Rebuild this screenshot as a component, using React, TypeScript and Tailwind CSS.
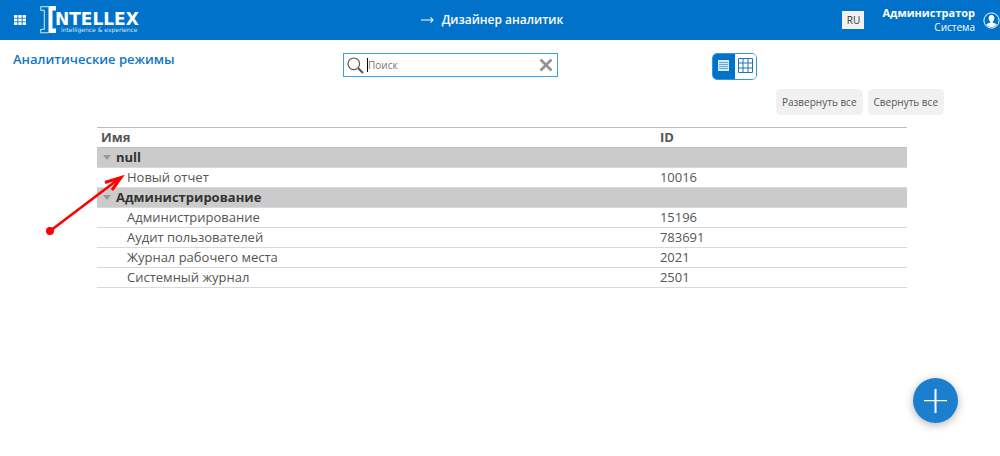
import { Fragment, useState } from 'react';

interface Report {
  name: string;
  id: number;
}

interface ReportGroup {
  name: string;
  reports: Report[];
}

const GROUPS: ReportGroup[] = [
  { name: 'null', reports: [{ name: 'Новый отчет', id: 10016 }] },
  {
    name: 'Администрирование',
    reports: [
      { name: 'Администрирование', id: 15196 },
      { name: 'Аудит пользователей', id: 783691 },
      { name: 'Журнал рабочего места', id: 2021 },
      { name: 'Системный журнал', id: 2501 },
    ],
  },
];

function Logo() {
  return (
    <svg width="104" height="28" viewBox="0 0 104 28" role="img" aria-label="Intellex">
      {/* Outlined left half of the I */}
      <path
        d="M8.5 .7H.7v3.6h3.6v19H.7v3.5H8.5"
        fill="none"
        stroke="#fff"
        strokeOpacity=".85"
        strokeWidth="1"
      />
      {/* Solid right half */}
      <path d="M8.5 0H16v4.500h-3.500v18H16V27H8.500z" fill="#fff" />
      <text x="15" y="19" fill="#fff" fontFamily="DejaVu Sans, sans-serif" fontSize="17" fontWeight="700">
        NTELLEX
      </text>
      <text x="21" y="26" fill="#fff" fillOpacity=".85" fontFamily="DejaVu Sans, sans-serif" fontSize="6">
        intelligence &amp; experience
      </text>
    </svg>
  );
}

function Header() {
  return (
    <header className="grid h-10 grid-cols-[1fr_auto_1fr] items-center bg-[#0072c9] text-white">
      <div className="flex items-center gap-3.5 pl-3.5">
        <button type="button" aria-label="Меню">
          <svg width="12" height="10" viewBox="0 0 12 10" fill="#fff">
            {[0, 1, 2].map((row) =>
              [0, 1, 2].map((col) => (
                <rect key={`${row}${col}`} x={col * 4.3} y={row * 3.6} width="3.4" height="2.8" />
              ))
            )}
          </svg>
        </button>
        <a href="#">
          <Logo />
        </a>
      </div>
      <h1 className="flex items-center gap-2 pr-4 text-xs font-semibold">
        <svg width="13" height="8" viewBox="0 0 13 8" fill="none" stroke="#fff" strokeWidth="1.1">
          <path d="M0 4h12M9.5 1.3L12 4L9.5 6.7" />
        </svg>
        Дизайнер аналитик
      </h1>
      <div className="flex items-center justify-end">
        <button type="button" className="h-[18px] w-[22px] bg-[#f1f1f1] text-[10px] text-[#333]">
          RU
        </button>
        <div className="ml-4.5 text-right">
          <div className="text-[11px] leading-[14px] font-bold">Администратор</div>
          <div className="text-[10px] leading-[14px]">Система</div>
        </div>
        <button type="button" aria-label="Профиль" className="ml-2">
          <svg width="17" height="17" viewBox="0 0 17 17">
            <circle cx="8.5" cy="8.5" r="7.6" fill="none" stroke="#fff" strokeWidth="1" />
            <path
              d="M8.5 3c-2 0-3 1.4-2.8 3.2.1 1.4.7 2.6 1.5 3.3v1.1c-.8.7-3 .9-3.9 2.1a6.7 6.7 0 0 0 10.4 0c-.9-1.2-3.1-1.4-3.9-2.1V9.5c.8-.7 1.4-1.9 1.5-3.3C11.5 4.4 10.5 3 8.5 3z"
              fill="#fff"
            />
          </svg>
        </button>
      </div>
    </header>
  );
}

function SearchBox() {
  return (
    <div className="relative flex h-6 items-center border border-[#3a9df0] bg-white">
      <label htmlFor="search" className="pl-[3px]">
        <span className="sr-only">Поиск</span>
        <svg width="17" height="17" viewBox="0 0 17 17" fill="none" stroke="#555">
          <circle cx="6.8" cy="6.8" r="5.8" strokeWidth="1.2" />
          <path d="M11.2 11.2L16 16" strokeWidth="2" />
        </svg>
      </label>
      {/* Text cursor */}
      <span className="absolute left-[23px] h-3.5 w-px bg-black" />
      <input
        id="search"
        type="text"
        placeholder="Поиск"
        className="h-full min-w-0 flex-1 pl-1 text-[10px] text-[#333] outline-none placeholder:text-[#757575]"
      />
      <button type="button" aria-label="Очистить" className="pr-1">
        <svg width="14" height="14" viewBox="0 0 14 14" stroke="#949494" strokeWidth="2.8">
          <path d="M1.5 1.5l11 11M12.5 1.5l-11 11" />
        </svg>
      </button>
    </div>
  );
}

function ViewSwitch() {
  return (
    <div className="flex h-[27px] w-[45px] overflow-hidden rounded-[5px] border border-[#2f97ea]">
      <button type="button" aria-label="Список" className="flex flex-1 items-center justify-center bg-[#0072c9] pb-0.5">
        <svg width="11" height="11" viewBox="0 0 11 11">
          <rect width="11" height="11" fill="#fff" fillOpacity=".85" />
          <path d="M1 2.5h9M1 4.5h9M1 6.5h9M1 8.5h9" stroke="#0072c9" strokeOpacity=".55" />
        </svg>
      </button>
      <button type="button" aria-label="Таблица" className="flex flex-1 items-center justify-center bg-white pb-0.5">
        <svg width="15" height="15" viewBox="0 0 15 15" fill="none" stroke="#1f73b7">
          <path d="M.5.5h14v14H.5zM5 0v15M10 0v15M0 5h15M0 10h15" />
        </svg>
      </button>
    </div>
  );
}

export default function App() {
  const [collapsed, setCollapsed] = useState<string[]>([]);

  const toggle = (name: string) =>
    setCollapsed((prev) => (prev.includes(name) ? prev.filter((n) => n !== name) : [...prev, name]));

  return (
    <div className="relative min-h-screen bg-white font-['Open_Sans',sans-serif] text-[#555]">
      <Header />

      <div className="grid grid-cols-[343fr_215px_442fr] items-start pt-[13px]">
        <h2 className="pl-[13px] text-[13px] leading-3 font-semibold text-[#0f75c4]">Аналитические режимы</h2>
        <SearchBox />
        <div className="flex justify-end pr-[243px]">
          <ViewSwitch />
        </div>
      </div>

      <div className="mt-[9px] flex justify-end gap-[5px] pr-14 text-[10px]">
        <button type="button" className="h-[26px] rounded-[5px] bg-[#f1f1f1] px-1.5" onClick={() => setCollapsed([])}>
          Развернуть все
        </button>
        <button
          type="button"
          className="h-[26px] rounded-[5px] bg-[#f1f1f1] px-1.5"
          onClick={() => setCollapsed(GROUPS.map((group) => group.name))}
        >
          Свернуть все
        </button>
      </div>

      <div className="mt-3 pr-[93px] pl-[97px]">
        <table className="w-full table-fixed border-separate border-spacing-0 text-left text-[13px] leading-[19px]">
          <thead>
            <tr>
              <th className="w-[69%] border-y border-[#bdbdbd] pl-1 font-bold">Имя</th>
              <th className="border-y border-[#bdbdbd] pl-1 font-bold">ID</th>
            </tr>
          </thead>
          <tbody>
            {GROUPS.map((group) => (
              <Fragment key={group.name}>
                <tr className="bg-[#cbcbcb] text-[#333]">
                  <th colSpan={2} className="border-b border-[#d9d9d9] font-bold">
                    <button
                      type="button"
                      className="flex items-center gap-[5px] pl-1.5"
                      onClick={() => toggle(group.name)}
                    >
                      <svg width="8" height="5" viewBox="0 0 8 5" fill="#999">
                        <path d="M0 0h8L4 5z" />
                      </svg>
                      {group.name}
                    </button>
                  </th>
                </tr>
                {!collapsed.includes(group.name) &&
                  group.reports.map((report) => (
                    <tr key={report.id}>
                      <td className="border-b border-[#d9d9d9] pl-[30px]">{report.name}</td>
                      <td className="border-b border-[#d9d9d9] pl-1">{report.id}</td>
                    </tr>
                  ))}
              </Fragment>
            ))}
          </tbody>
        </table>
      </div>

      {/* Pointer to the new report */}
      <svg
        className="pointer-events-none absolute top-[170px] left-[44px]"
        width="82"
        height="68"
        viewBox="0 0 82 68"
        fill="none"
        stroke="#f00"
      >
        <circle cx="6" cy="61" r="4" fill="#f00" stroke="none" />
        <path d="M6 61L76 8" strokeWidth="2.6" />
        <path d="M61 12.500L77 7.500L68 20" strokeWidth="3" />
      </svg>

      <button
        type="button"
        aria-label="Добавить"
        className="fixed right-[42px] bottom-[33px] flex size-[45px] items-center justify-center rounded-full bg-[#1b7fce] shadow-[0_2px_8px_rgba(0,0,0,0.3)]"
      >
        <svg width="23" height="24" viewBox="0 0 23 24" fill="#fff">
          <path d="M10.5 0h2v24h-2zM0 11h23v1.3H0z" />
        </svg>
      </button>
    </div>
  );
}
